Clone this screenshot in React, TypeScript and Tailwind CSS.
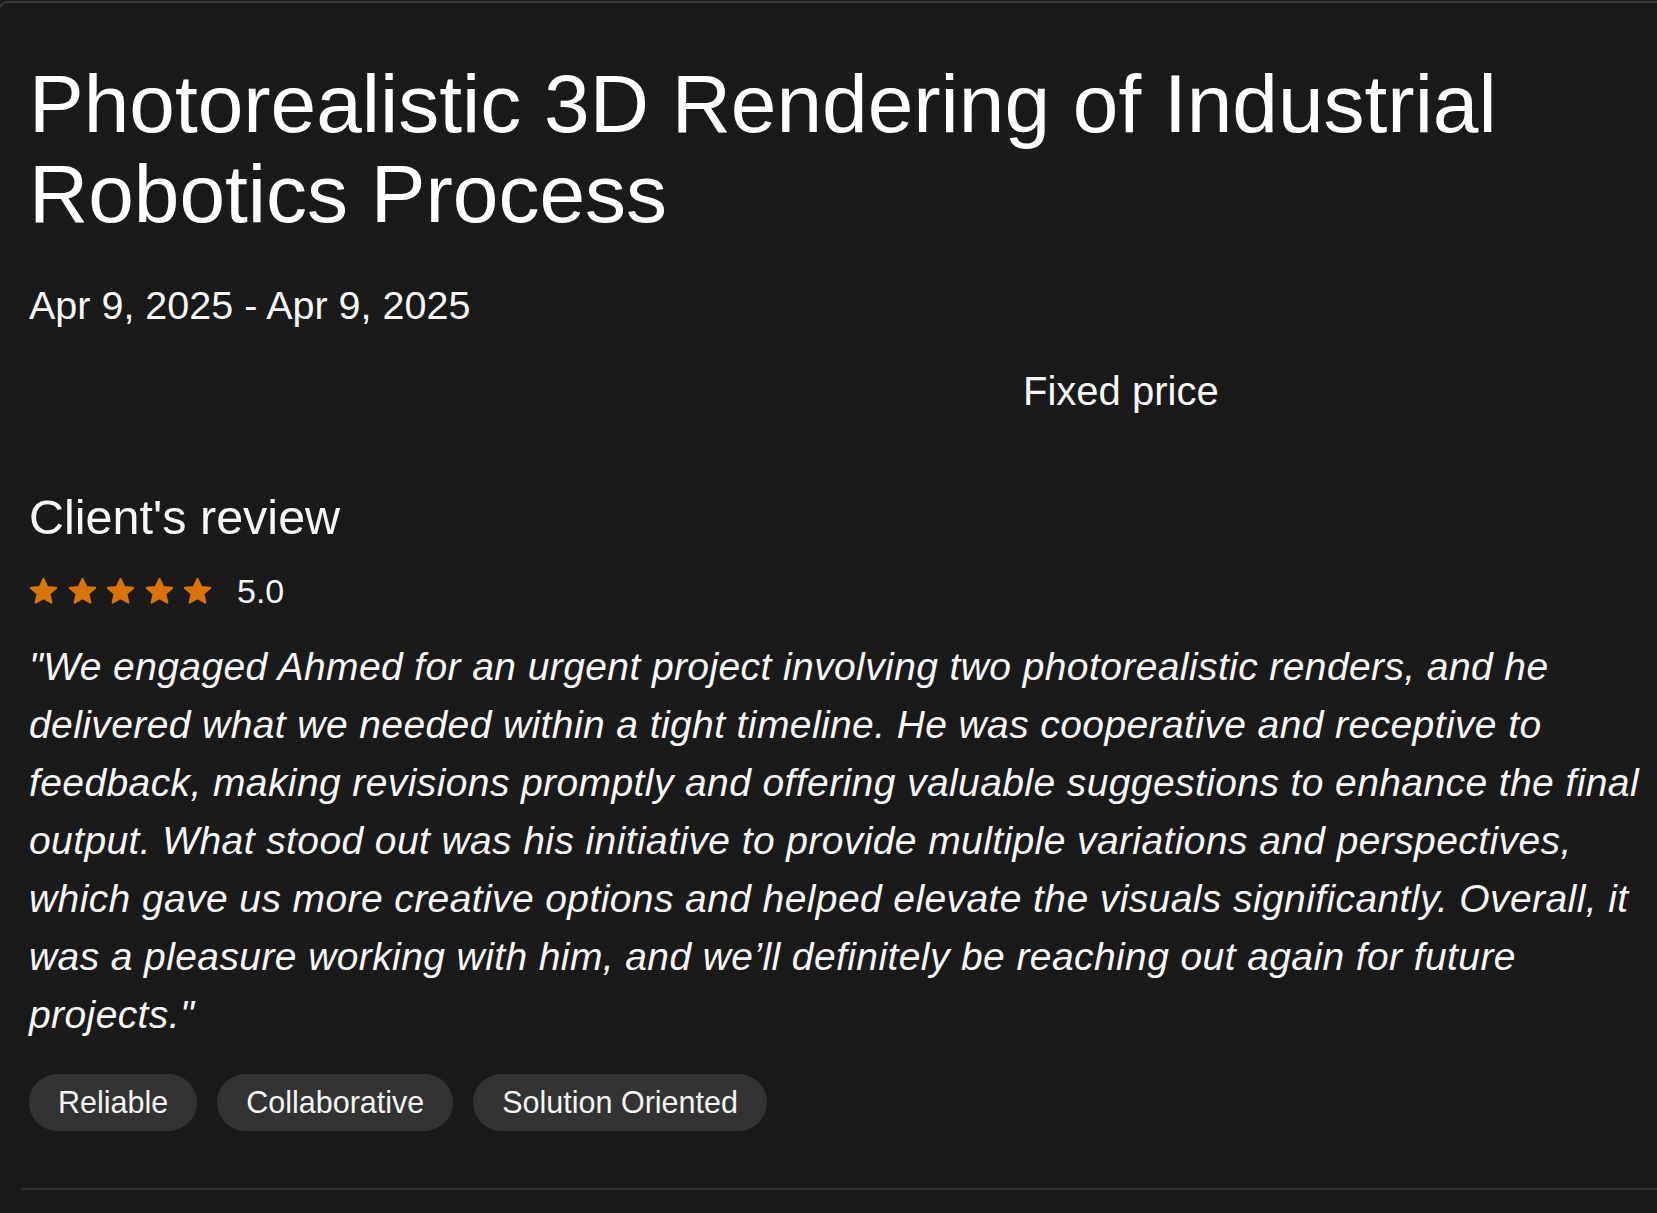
const tags = ["Reliable", "Collaborative", "Solution Oriented"];

const reviewLines = [
  "\"We engaged Ahmed for an urgent project involving two photorealistic renders, and he",
  "delivered what we needed within a tight timeline. He was cooperative and receptive to",
  "feedback, making revisions promptly and offering valuable suggestions to enhance the final",
  "output. What stood out was his initiative to provide multiple variations and perspectives,",
  "which gave us more creative options and helped elevate the visuals significantly. Overall, it",
  "was a pleasure working with him, and we’ll definitely be reaching out again for future",
  "projects.\"",
];

function StarIcon() {
  return (
    <svg width="31" height="31" viewBox="0 0 24 24" className="shrink-0">
      <path
        d="M12 2.2l2.9 6.3 6.9.7-5.2 4.6 1.5 6.8L12 17.1l-6.1 3.5 1.5-6.8-5.2-4.6 6.9-.7z"
        fill="#d9730a"
        stroke="#d9730a"
        strokeWidth="1.6"
        strokeLinejoin="round"
      />
    </svg>
  );
}

export default function App() {
  return (
    <div className="min-h-screen bg-[#1a1a1a] font-['Liberation_Sans',Arial,sans-serif] text-[#f7f7f7] overflow-hidden">
      <div className="pt-[1px]">
        <div className="-ml-[2px] border-t-2 border-l-2 border-[#3b3b3b] rounded-tl-[10px] pl-[21px] pt-[56px] pb-[22px]">
          <div className="pl-[8px]">
            {/* 제목 */}
            <h1 className="text-[82px] leading-[90px] font-normal text-white">
              Photorealistic 3D Rendering of Industrial
              <br />
              Robotics Process
            </h1>

            {/* 기간 */}
            <p className="mt-[42px] text-[39.5px] leading-[48px]">Apr 9, 2025 - Apr 9, 2025</p>

            {/* 가격 */}
            <div className="mt-[38px] grid grid-cols-[994px_1fr]">
              <div />
              <p className="text-[40px] leading-[48px]">Fixed price</p>
            </div>

            {/* 리뷰 */}
            <h2 className="mt-[74px] text-[48.5px] leading-[56px] font-normal">Client's review</h2>

            <div className="mt-[26px] flex h-[40px] items-center">
              <div className="-ml-[1px] flex items-center gap-[7.5px]">
                <StarIcon />
                <StarIcon />
                <StarIcon />
                <StarIcon />
                <StarIcon />
              </div>
              <span className="ml-[24px] text-[34px] leading-[40px]">5.0</span>
            </div>

            <p className="mt-[27px] text-[39px] leading-[58px] italic tracking-[0.4px] whitespace-nowrap">
              {reviewLines.map((line, i) => (
                <span key={i}>
                  {line}
                  {i < reviewLines.length - 1 && <br />}
                </span>
              ))}
            </p>

            {/* 태그 */}
            <div className="mt-[30px] flex gap-[20px]">
              {tags.map((tag) => (
                <span
                  key={tag}
                  className="flex h-[57px] items-center rounded-full bg-[#333333] px-[29px] text-[30.5px] leading-none text-[#f5f5f5]"
                >
                  {tag}
                </span>
              ))}
            </div>
          </div>

          {/* 구분선 */}
          <div className="mt-[57px] h-[2px] bg-[#303030]" />
        </div>
      </div>
    </div>
  );
}
